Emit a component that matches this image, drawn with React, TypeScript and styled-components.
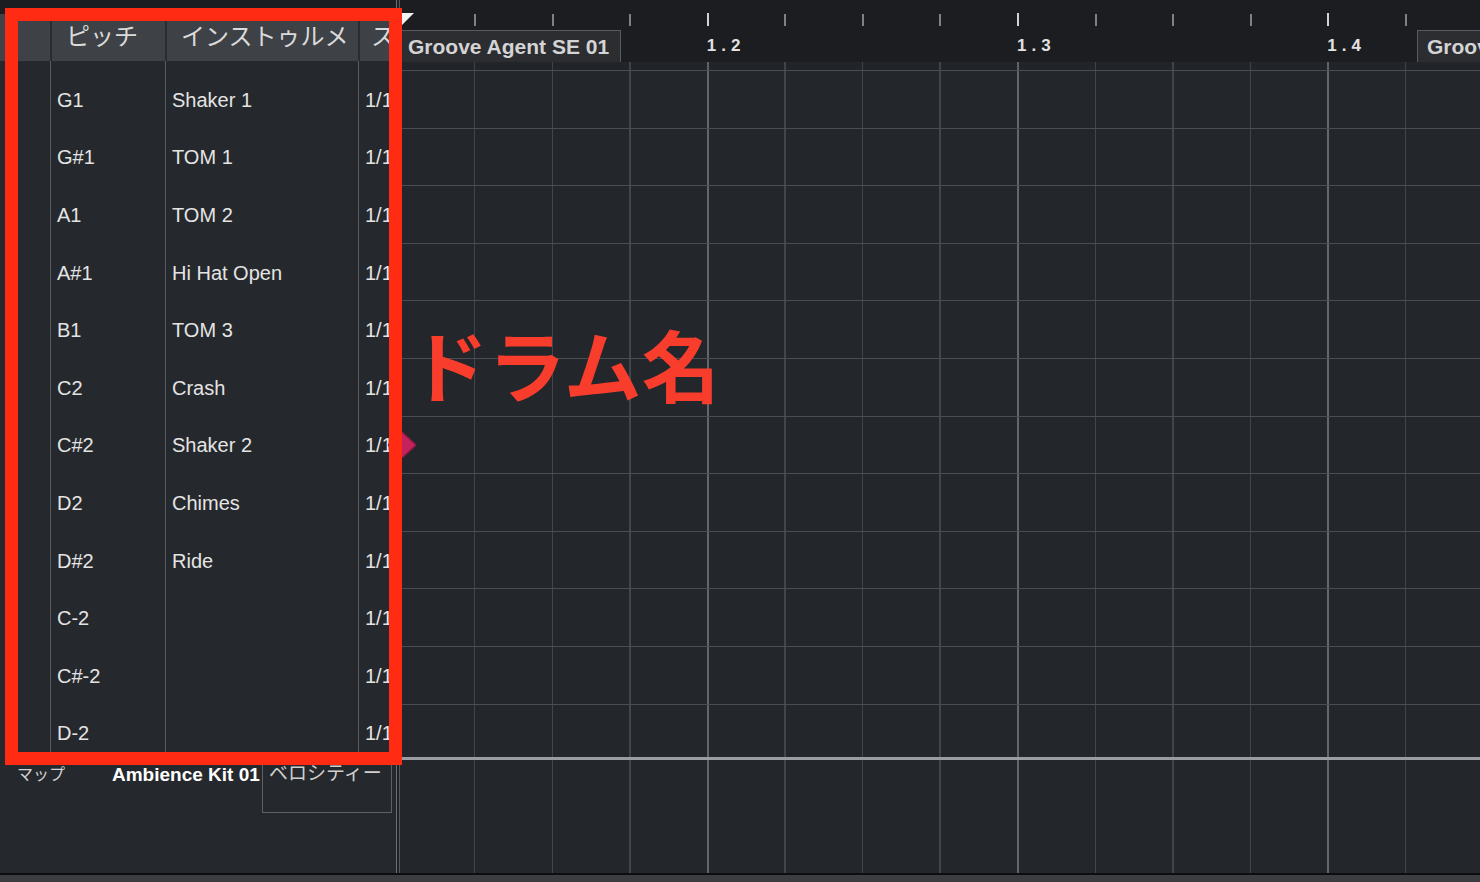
import React from 'react';
import styled, { createGlobalStyle } from 'styled-components';

const ROW_H = 57.6;
const SUB = 77.58; // one sixteenth on the ruler
const BEAT = SUB * 4;
const LINE_SHIFT = -3.6;

const drums = [
  { pitch: 'G1', name: 'Shaker 1' },
  { pitch: 'G#1', name: 'TOM 1' },
  { pitch: 'A1', name: 'TOM 2' },
  { pitch: 'A#1', name: 'Hi Hat Open' },
  { pitch: 'B1', name: 'TOM 3' },
  { pitch: 'C2', name: 'Crash' },
  { pitch: 'C#2', name: 'Shaker 2' },
  { pitch: 'D2', name: 'Chimes' },
  { pitch: 'D#2', name: 'Ride' },
  { pitch: 'C-2', name: '' },
  { pitch: 'C#-2', name: '' },
  { pitch: 'D-2', name: '' },
];

const GlobalStyle = createGlobalStyle`
  html, body {
    margin: 0;
    padding: 0;
    background: #23262a;
  }
  body {
    width: 1480px;
    height: 882px;
    overflow: hidden;
    font-family: "Liberation Sans", "Noto Sans CJK JP", sans-serif;
  }
`;

const Screen = styled.div`
  position: relative;
  width: 1480px;
  height: 882px;
  display: flex;
  flex-direction: column;
  background: #23262a;
  overflow: hidden;
`;

const Main = styled.div`
  display: flex;
  height: 873px;
`;

/* ---------- drum map list ---------- */

const LeftPanel = styled.div`
  width: 396px;
  flex-shrink: 0;
  display: flex;
  flex-direction: column;
  background: #25282c;
`;

const TopStrip = styled.div`
  height: 14px;
  background: #1b1d20;
`;

const COLS = '50px 115px 193px 1fr';

const HeaderRow = styled.div`
  display: grid;
  grid-template-columns: ${COLS};
  height: 47px;
  background: #3e4145;
`;

const HeaderCell = styled.div<{ $pad?: number }>`
  padding-left: ${p => p.$pad ?? 14}px;
  font-size: 24px;
  line-height: 46px;
  color: #dadada;
  white-space: nowrap;
  overflow: hidden;
  & + & {
    border-left: 2px solid #2a2c30;
  }
`;

const BodyRow = styled.div<{ $h: number }>`
  display: grid;
  grid-template-columns: ${COLS};
  height: ${p => p.$h}px;
`;

const Cell = styled.div`
  display: flex;
  align-items: center;
  padding: 3px 0 0 6px;
  font-size: 20px;
  color: #e4e4e4;
  white-space: nowrap;
  overflow: hidden;
  & + & {
    border-left: 1.5px solid #585b5f;
  }
`;

const Footer = styled.div`
  flex: 1;
  display: flex;
  align-items: flex-start;
  padding-top: 2px;
`;

const MapLabel = styled.div`
  width: 95px;
  padding-left: 17px;
  padding-top: 2px;
  font-size: 16px;
  line-height: 22px;
  color: #d2d2d2;
`;

const KitName = styled.div`
  width: 150px;
  padding-top: 1px;
  font-size: 19px;
  font-weight: 700;
  line-height: 24px;
  color: #ffffff;
  white-space: nowrap;
`;

const VelocityBox = styled.div`
  width: 130px;
  height: 53px;
  margin-top: -2px;
  box-sizing: border-box;
  border: 1.5px solid #5e6165;
  border-top: none;
  padding: 2px 0 0 6px;
  font-size: 19px;
  line-height: 24px;
  color: #d0d0d0;
  white-space: nowrap;
  overflow: hidden;
`;

const Divider = styled.div`
  width: 4px;
  flex-shrink: 0;
  box-sizing: border-box;
  border-left: 1.5px solid #6c6f73;
  border-right: 1.5px solid #55585c;
  background: #1f2124;
`;

/* ---------- editor ---------- */

const Editor = styled.div`
  flex: 1;
  display: flex;
  flex-direction: column;
  min-width: 0;
`;

const Ruler = styled.div`
  position: relative;
  height: 62px;
  background: #1b1d20;
  display: flex;
  flex-direction: column;
`;

const TickRow = styled.div`
  height: 30px;
  background-image:
    repeating-linear-gradient(to right, #d2d2d2 0 2px, transparent 2px ${BEAT}px),
    repeating-linear-gradient(to right, #7f8285 0 2px, transparent 2px ${SUB}px);
  background-size: 100% 15px, 100% 14px;
  background-position: ${LINE_SHIFT}px 13px, ${LINE_SHIFT}px 14px;
  background-repeat: no-repeat;
`;

const LabelRow = styled.div`
  flex: 1;
  display: flex;
  margin-left: ${LINE_SHIFT}px;
`;

const BeatLabel = styled.div`
  width: ${BEAT}px;
  flex-shrink: 0;
  padding-top: 4px;
  font-size: 17px;
  font-weight: 700;
  letter-spacing: 5px;
  line-height: 32px;
  color: #e2e2e2;
`;

const PartTag = styled.div<{ $left: number; $w: number }>`
  position: absolute;
  top: 30px;
  left: ${p => p.$left}px;
  width: ${p => p.$w}px;
  height: 32px;
  box-sizing: border-box;
  border: 1.5px solid #575a5e;
  border-bottom: none;
  background: #2b2d31;
  padding-left: 7px;
  font-size: 21px;
  font-weight: 700;
  line-height: 31px;
  color: #d4d4d4;
  white-space: nowrap;
  overflow: hidden;
`;

const Locator = styled.svg`
  position: absolute;
  left: 0;
  top: 13px;
`;

const Lanes = styled.div`
  flex: 1;
  display: flex;
  flex-direction: column;
  background-color: #23262a;
  background-image:
    repeating-linear-gradient(to right, #63676b 0 2px, transparent 2px ${BEAT}px),
    repeating-linear-gradient(to right, #42464a 0 1.5px, transparent 1.5px ${SUB}px);
  background-position: ${LINE_SHIFT}px 0;
  background-repeat: no-repeat;
  background-size: 100% 100%;
`;

const LaneStrip = styled.div`
  height: 8px;
  background: rgba(0, 0, 0, 0.04);
`;

const LaneRow = styled.div<{ $h: number }>`
  height: ${p => p.$h}px;
  flex-shrink: 0;
  box-sizing: border-box;
  border-top: 1.5px solid #4a4e52;
`;

const EndLine = styled.div`
  height: 3.5px;
  flex-shrink: 0;
  background: #9a9da1;
`;

const BottomBar = styled.div`
  height: 9px;
  box-sizing: border-box;
  border-top: 2px solid #0c0d0e;
  background: #3b3d40;
`;

/* ---------- annotation ---------- */

const Frame = styled.div`
  position: absolute;
  left: 5px;
  top: 8px;
  width: 397px;
  height: 757px;
  box-sizing: border-box;
  border: 13px solid #ff2b12;
  pointer-events: none;
`;

const Callout = styled.div`
  position: absolute;
  left: 410px;
  top: 324px;
  font-family: "Noto Sans CJK JP", sans-serif;
  font-size: 78px;
  font-weight: 600;
  line-height: 1;
  color: #f93d2d;
  white-space: nowrap;
`;

const NoteMarker = styled.svg`
  position: absolute;
  left: 388px;
  top: 432px;
`;

export default function App() {
  const lastIdx = drums.length - 1;
  return (
    <Screen>
      <GlobalStyle />
      <Main>
        <LeftPanel>
          <TopStrip />
          <HeaderRow>
            <HeaderCell />
            <HeaderCell>ピッチ</HeaderCell>
            <HeaderCell>インストゥルメ</HeaderCell>
            <HeaderCell $pad={11}>スナップ</HeaderCell>
          </HeaderRow>
          <BodyRow $h={9}>
            <Cell />
            <Cell />
            <Cell />
            <Cell />
          </BodyRow>
          {drums.map((d, i) => (
            <BodyRow key={d.pitch} $h={i === lastIdx ? 56.4 : ROW_H}>
              <Cell />
              <Cell>{d.pitch}</Cell>
              <Cell>{d.name}</Cell>
              <Cell>1/16</Cell>
            </BodyRow>
          ))}
          <Footer>
            <MapLabel>マップ</MapLabel>
            <KitName>Ambience Kit 01</KitName>
            <VelocityBox>ベロシティー</VelocityBox>
          </Footer>
        </LeftPanel>
        <Divider />
        <Editor>
          <Ruler>
            <TickRow />
            <LabelRow>
              {['1.1', '1.2', '1.3', '1.4'].map(b => (
                <BeatLabel key={b}>{b}</BeatLabel>
              ))}
            </LabelRow>
            <PartTag $left={0} $w={221}>Groove Agent SE 01</PartTag>
            <PartTag $left={1017} $w={80} style={{ paddingLeft: 9 }}>
              Groove Agent SE 01
            </PartTag>
            <Locator width="14" height="14" viewBox="0 0 14 14">
              <polygon points="0,0 14,0 0,14" fill="#f2f2f2" />
            </Locator>
          </Ruler>
          <Lanes>
            <LaneStrip />
            {drums.map((d, i) => (
              <LaneRow key={d.pitch} $h={i === lastIdx ? 53 : ROW_H} />
            ))}
            <EndLine />
          </Lanes>
        </Editor>
      </Main>
      <BottomBar />

      <NoteMarker width="28" height="26" viewBox="0 0 28 26">
        <polygon points="14,0 28,13 14,26 0,13" fill="#c4225c" stroke="#8e1944" strokeWidth="1.5" />
      </NoteMarker>
      <Frame />
      <Callout>ドラム名</Callout>
    </Screen>
  );
}
